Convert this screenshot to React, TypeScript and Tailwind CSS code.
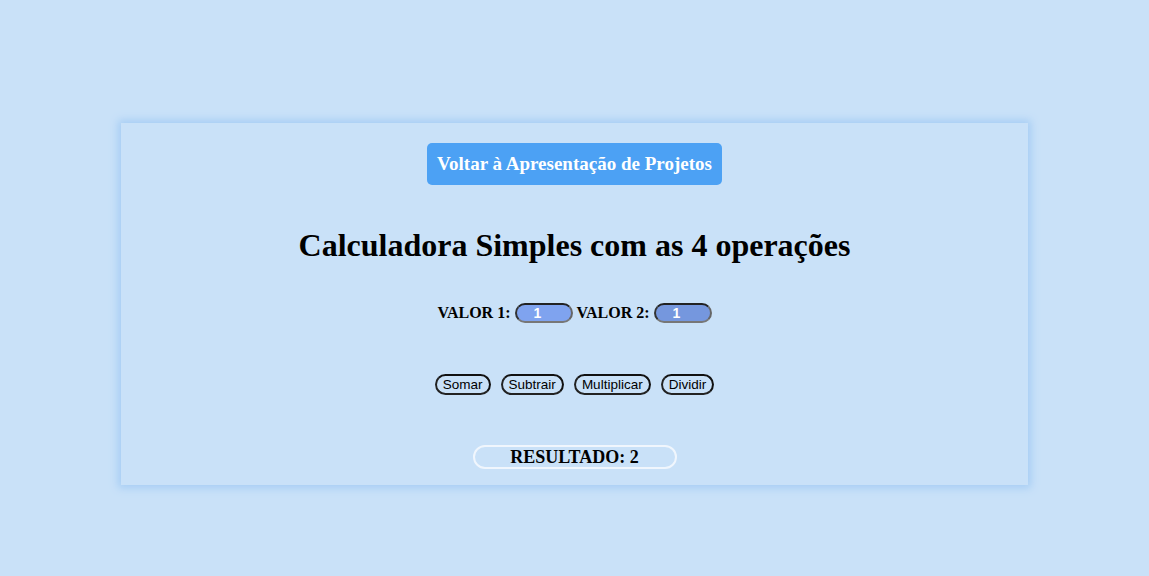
import React from "react";

export default function App() {
  const serif = { fontFamily: '"Liberation Serif", "Times New Roman", serif' };
  return (
    <div className="min-h-[576px] w-full bg-[#c9e1f8] pt-[123px]" style={serif}>
      <div className="mx-auto w-[907px] bg-[#c9e1f8] shadow-[0_0_8px_3px_#a6cdf4] pt-[20px] pb-[16px] flex flex-col items-center">
        <button className="h-[42px] w-[295px] rounded-[5px] bg-[#4ca1f4] text-white font-bold text-[19px] [font-family:'Liberation_Serif',serif]">
          Voltar à Apresentação de Projetos
        </button>
        <h1 className="mt-[42px] text-[32px] leading-[37px] font-bold text-black">
          Calculadora Simples com as 4 operações
        </h1>
        <div className="mt-[38px] flex items-center text-[16px] font-bold text-black h-[22px]">
          <span>VALOR 1:</span>
          <input
            readOnly
            value="1"
            className="ml-[4px] h-[20px] w-[58px] rounded-full border-2 border-t-[#222] border-l-[#333] border-b-[#777] border-r-[#666] bg-[#7fa3ef] pl-[17px] text-left text-white font-bold text-[14px] [font-family:'Liberation_Sans',Arial,sans-serif] outline-none"
          />
          <span className="ml-[4px]">VALOR 2:</span>
          <input
            readOnly
            value="1"
            className="ml-[4px] h-[20px] w-[58px] rounded-full border-2 border-t-[#222] border-l-[#333] border-b-[#777] border-r-[#666] bg-[#7597de] pl-[17px] text-left text-white font-bold text-[14px] [font-family:'Liberation_Sans',Arial,sans-serif] outline-none"
          />
        </div>
        <div className="mt-[50px] flex gap-[10px] [font-family:'Liberation_Sans',Arial,sans-serif]">
          {["Somar", "Subtrair", "Multiplicar", "Dividir"].map((t) => (
            <button
              key={t}
              className="h-[21px] px-[6px] rounded-full border-2 border-t-[#111] border-l-[#222] border-b-[#222] border-r-[#111] text-[13.5px] leading-[17px] text-black bg-transparent"
            >
              {t}
            </button>
          ))}
        </div>
        <div className="mt-[50px] h-[24px] w-[204px] rounded-full border-2 border-[#f0f6fd] flex items-center justify-center text-[18px] font-bold text-black">
          RESULTADO: 2
        </div>
      </div>
    </div>
  );
}
